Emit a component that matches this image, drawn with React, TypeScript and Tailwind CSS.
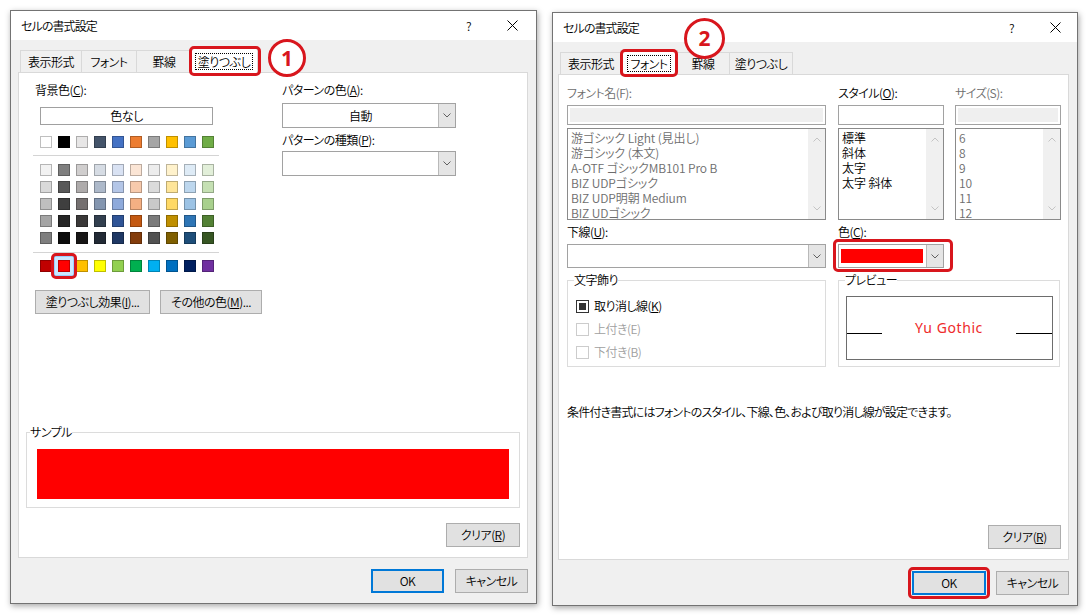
import React from "react";

const themeRow = ["#ffffff", "#000000", "#e7e6e6", "#44546a", "#4472c4", "#ed7d31", "#a5a5a5", "#ffc000", "#5b9bd5", "#70ad47"];
const tints = [
  ["#f2f2f2", "#7f7f7f", "#d0cece", "#d6dce4", "#d9e2f3", "#fbe5d5", "#ededed", "#fff2cc", "#deebf6", "#e2efd9"],
  ["#d9d9d9", "#595959", "#aeabab", "#adb9ca", "#b4c6e7", "#f7caac", "#dbdbdb", "#fee599", "#bdd7ee", "#c5e0b3"],
  ["#bfbfbf", "#3f3f3f", "#757070", "#8496b0", "#8eaadb", "#f4b083", "#c9c9c9", "#ffd965", "#9cc3e5", "#a8d08d"],
  ["#a5a5a5", "#262626", "#3a3838", "#323f4f", "#2f5496", "#c45911", "#7b7b7b", "#bf8f00", "#2e75b5", "#538135"],
  ["#7f7f7f", "#0c0c0c", "#171616", "#222a35", "#1f3864", "#833c0b", "#525252", "#7f5f00", "#1e4e79", "#375623"],
];
const standard = ["#c00000", "#ff0000", "#ffc000", "#ffff00", "#92d050", "#00b050", "#00b0f0", "#0070c0", "#002060", "#7030a0"];

function ChevDown({ color = "#606060" }: { color?: string }) {
  return (
    <svg width="8" height="5" viewBox="0 0 8 5">
      <path d="M0.5 0.5 L4 4 L7.5 0.5" fill="none" stroke={color} strokeWidth="1" />
    </svg>
  );
}
function ChevUp({ color = "#c4c4c4" }: { color?: string }) {
  return (
    <svg width="8" height="5" viewBox="0 0 8 5">
      <path d="M0.5 4.5 L4 1 L7.5 4.5" fill="none" stroke={color} strokeWidth="1" />
    </svg>
  );
}
function XIcon() {
  return (
    <svg width="11" height="11" viewBox="0 0 11 11">
      <path d="M0.5 0.5 L10.5 10.5 M10.5 0.5 L0.5 10.5" stroke="#000" strokeWidth="1" />
    </svg>
  );
}

function RedBox({ className }: { className: string }) {
  return <div className={`pointer-events-none absolute z-20 rounded-[5px] border-[3px] border-[#d8161d] ${className}`} />;
}

function Btn({ children, className = "", def = false }: { children: React.ReactNode; className?: string; def?: boolean }) {
  return (
    <div
      className={`flex h-[24px] items-center justify-center bg-[#e1e1e1] text-[12px] leading-[16px] text-black ${
        def ? "border-2 border-[#0078d7]" : "border border-[#adadad]"
      } ${className}`}
    >
      {children}
    </div>
  );
}

function Combo({ children, className = "", center = true }: { children?: React.ReactNode; className?: string; center?: boolean }) {
  return (
    <div className={`flex border border-[#a2a2a2] bg-white ${className}`}>
      <div className={`flex flex-1 items-center ${center ? "justify-center" : ""}`}>{children}</div>
      <div className="flex w-[17px] items-center justify-center border-l border-[#b9b9b9] bg-[#e5e5e5]">
        <ChevDown />
      </div>
    </div>
  );
}

function Swatch({ c }: { c: string }) {
  return <div className="h-[12px] w-[12px] border border-[#00000040]" style={{ backgroundColor: c }} />;
}

function SwatchRow({ colors, className = "", sel = -1 }: { colors: string[]; className?: string; sel?: number }) {
  return (
    <div className={`flex gap-[6px] ${className}`}>
      {colors.map((c, i) =>
        i === sel ? (
          <div key={i} className="relative h-[12px] w-[12px]">
            <div className="absolute -inset-[4px] border border-[#99d1ff] bg-[#cce8ff]" />
            <div className="relative">
              <Swatch c={c} />
            </div>
            <RedBox className="-left-[7px] -right-[7px] -top-[7px] -bottom-[7px]" />
          </div>
        ) : (
          <Swatch key={i} c={c} />
        )
      )}
    </div>
  );
}

function Tabs({ selected, widths, box }: { selected: number; widths: number[]; box: string }) {
  const labels = ["表示形式", "フォント", "罫線", "塗りつぶし"];
  return (
    <div className="flex h-[24px] items-end pl-[2px]">
      {labels.map((l, i) => {
        const w = widths[i];
        if (i === selected) {
          return (
            <div
              key={l}
              className="relative z-10 -mb-px -ml-[2px] -mr-[2px] flex h-[25px] items-center justify-center border border-b-0 border-[#d9d9d9] bg-white"
              style={{ width: w + 4 }}
            >
              <span className="border border-dotted border-black px-[2px] leading-[15px]">{l}</span>
              <RedBox className={box} />
            </div>
          );
        }
        return (
          <div
            key={l}
            className={`flex h-[22px] items-center justify-center border border-b-0 border-[#d9d9d9] bg-[#f0f0f0] ${i > 0 && i - 1 !== selected ? "-ml-px" : ""}`}
            style={{ width: w }}
          >
            {l}
          </div>
        );
      })}
    </div>
  );
}

function TitleBar({ xMr }: { xMr: string }) {
  return (
    <div className="flex h-[29px] items-center bg-white pl-[10px]">
      <span className="leading-[16px] tracking-[-0.9px]">セルの書式設定</span>
      <span className="ml-auto leading-[16px]">?</span>
      <div className={`ml-[36px] flex items-center ${xMr}`}>
        <XIcon />
      </div>
    </div>
  );
}

function ListBox({ items, gray }: { items: string[]; gray: boolean }) {
  return (
    <div className="mt-[3px] flex h-[92px] border border-[#8a8a8a] bg-white">
      <div className={`flex-1 pl-[3px] pt-[1px] leading-[15px] tracking-[-0.1px] ${gray ? "text-[#6d6d6d]" : "text-black"}`}>
        {items.map((i) => (
          <div key={i} className="whitespace-nowrap">
            {i}
          </div>
        ))}
      </div>
      <div className="flex w-[17px] flex-col items-center justify-between bg-[#f0f0f0] py-[8px]">
        <ChevUp />
        <ChevDown color="#c4c4c4" />
      </div>
    </div>
  );
}

function Check({ label, checked, disabled }: { label: React.ReactNode; checked?: boolean; disabled?: boolean }) {
  return (
    <div className="flex h-[18px] items-center">
      <div
        className={`flex h-[13px] w-[13px] items-center justify-center border bg-white ${
          disabled ? "border-[#cccccc]" : "border-[#333333]"
        }`}
      >
        {checked && <div className="h-[7px] w-[7px] bg-[#333333]" />}
      </div>
      <span className={`ml-[5px] leading-[16px] ${disabled ? "text-[#a0a0a0]" : "text-black"}`}>{label}</span>
    </div>
  );
}

function LeftDialog() {
  return (
    <div className="ml-[10px] mt-[10px] flex h-[594px] w-[527px] flex-col border border-[#737373] bg-[#f0f0f0] shadow-[1px_2px_6px_rgba(0,0,0,0.35)]">
      <TitleBar xMr="mr-[18px]" />
      <div className="flex flex-1 flex-col pl-[7px] pr-[8px] pt-[8px]">
        <Tabs selected={3} widths={[62, 56, 56, 64]} box="-left-[2px] -right-[4px] -top-[3px] -bottom-[3px]" />
        <div className="flex flex-1 flex-col border border-[#d9d9d9] bg-white">
          <div className="flex pl-[16px] pt-[9px]">
            <div className="flex w-[247px] flex-col">
              <div className="h-[16px] leading-[16px]">
                背景色(<u>C</u>):
              </div>
              <div className="ml-[5px] mt-[9px] flex h-[18px] w-[173px] items-center justify-center border border-[#a0a0a0] bg-white leading-[16px]">
                色なし
              </div>
              <SwatchRow colors={themeRow} className="ml-[5px] mt-[11px]" />
              <div className="-ml-[2px] mt-[7px] h-px w-[186px] bg-[#d4d4d4]" />
              <div className="ml-[5px] mt-[8px] flex flex-col gap-[5px]">
                {tints.map((r, i) => (
                  <SwatchRow key={i} colors={r} />
                ))}
              </div>
              <div className="-ml-[2px] mt-[8px] h-px w-[186px] bg-[#d4d4d4]" />
              <SwatchRow colors={standard} className="ml-[5px] mt-[7px]" sel={1} />
              <div className="mt-[18px] flex gap-[10px]">
                <Btn className="w-[115px]">
                  塗りつぶし効果(<u>I</u>)...
                </Btn>
                <Btn className="w-[102px]">
                  その他の色(<u>M</u>)...
                </Btn>
              </div>
            </div>
            <div className="flex w-[174px] flex-col">
              <div className="h-[16px] leading-[16px]">
                パターンの色(<u>A</u>):
              </div>
              <Combo className="mt-[5px] h-[25px]">
                <span className="leading-[16px]">自動</span>
              </Combo>
              <div className="mt-[4px] h-[16px] leading-[16px]">
                パターンの種類(<u>P</u>):
              </div>
              <Combo className="mt-[3px] h-[25px]" />
            </div>
          </div>
          <fieldset className="mx-[7px] mt-auto border border-[#dcdcdc] px-[10px] pb-[8px] pt-[9px]">
            <legend className="ml-[-7px] px-0 leading-[16px]">サンプル</legend>
            <div className="h-[50px] bg-[#ff0000]" />
          </fieldset>
          <div className="mb-[10px] mt-[15px] flex justify-end pr-[7px]">
            <Btn className="w-[74px]">
              クリア(<u>R</u>)
            </Btn>
          </div>
        </div>
      </div>
      <div className="flex h-[45px] items-start justify-end gap-[11px] pr-[8px] pt-[11px]">
        <Btn def className="w-[73px]">
          OK
        </Btn>
        <Btn className="w-[73px]">キャンセル</Btn>
      </div>
    </div>
  );
}

function RightDialog() {
  return (
    <div className="ml-[15px] mt-[12px] flex h-[594px] w-[526px] flex-col border border-[#737373] bg-[#f0f0f0] shadow-[1px_2px_6px_rgba(0,0,0,0.35)]">
      <TitleBar xMr="mr-[16px]" />
      <div className="flex flex-1 flex-col pl-[5px] pr-[8px] pt-[8px]">
        <Tabs selected={1} widths={[62, 54, 54, 64]} box="-left-[1px] -right-[1px] -top-[2px] -bottom-[2px]" />
        <div className="flex flex-1 flex-col border border-[#d9d9d9] bg-white pl-[8px] pt-[10px]">
          <div className="flex">
            <div className="flex w-[259px] flex-col">
              <div className="h-[16px] leading-[16px] text-[#6d6d6d]">フォント名(F):</div>
              <div className="mt-[4px] h-[20px] border border-[#a2a2a2] bg-white p-[2px]">
                <div className="h-full bg-[#efefef]" />
              </div>
              <ListBox
                gray
                items={["游ゴシック Light (見出し)", "游ゴシック (本文)", "A-OTF ゴシックMB101 Pro B", "BIZ UDPゴシック", "BIZ UDP明朝 Medium", "BIZ UDゴシック"]}
              />
            </div>
            <div className="ml-[12px] flex w-[106px] flex-col">
              <div className="h-[16px] leading-[16px]">
                スタイル(<u>O</u>):
              </div>
              <div className="mt-[4px] h-[20px] border border-[#a2a2a2] bg-white" />
              <ListBox gray={false} items={["標準", "斜体", "太字", "太字 斜体"]} />
            </div>
            <div className="ml-[11px] flex w-[106px] flex-col">
              <div className="h-[16px] leading-[16px] text-[#6d6d6d]">サイズ(S):</div>
              <div className="mt-[4px] h-[20px] border border-[#a2a2a2] bg-white p-[2px]">
                <div className="h-full bg-[#efefef]" />
              </div>
              <ListBox gray items={["6", "8", "9", "10", "11", "12"]} />
            </div>
          </div>
          <div className="mt-[4px] flex">
            <div className="flex w-[259px] flex-col">
              <div className="h-[16px] leading-[16px]">
                下線(<u>U</u>):
              </div>
              <Combo className="mt-[4px] h-[24px]" />
            </div>
            <div className="ml-[12px] flex w-[106px] flex-col">
              <div className="h-[16px] leading-[16px]">
                色(<u>C</u>):
              </div>
              <div className="relative mt-[4px]">
                <Combo className="h-[24px]" center={false}>
                  <div className="ml-[2px] mr-[3px] h-[14px] flex-1 bg-[#ff0000]" />
                </Combo>
                <RedBox className="-left-[5px] -right-[9px] -top-[5px] -bottom-[4px]" />
              </div>
            </div>
          </div>
          <div className="mt-[4px] flex">
            <fieldset className="w-[259px] border border-[#dcdcdc] pb-[5px] pl-[8px] pt-[9px]">
              <legend className="ml-[-2px] px-0 leading-[16px]">文字飾り</legend>
              <div className="flex flex-col gap-[5px]">
                <Check
                  checked
                  label={
                    <>
                      取り消し線(<u>K</u>)
                    </>
                  }
                />
                <Check disabled label="上付き(E)" />
                <Check disabled label="下付き(B)" />
              </div>
            </fieldset>
            <fieldset className="ml-[12px] w-[222px] border border-[#dcdcdc] pb-[6px] pl-[7px] pr-[6px] pt-[8px]">
              <legend className="ml-[-1px] px-0 leading-[16px]">プレビュー</legend>
              <div className="flex h-[64px] items-center justify-between border border-[#6d6d6d] bg-white">
                <div className="mt-[10px] h-px w-[35px] bg-black" />
                <span className="font-['Noto_Sans','Noto_Sans_CJK_JP',sans-serif] text-[14px] font-normal leading-[18px] tracking-[0.6px] text-[#ee2a2a]">
                  Yu Gothic
                </span>
                <div className="mt-[10px] h-px w-[36px] bg-black" />
              </div>
            </fieldset>
          </div>
          <div className="mt-[37px] h-[16px] whitespace-nowrap leading-[16px] tracking-[-0.8px]">
            条件付き書式にはフォントのスタイル、下線、色、および取り消し線が設定できます。
          </div>
          <div className="mb-[10px] mt-auto flex justify-end pr-[7px]">
            <Btn className="w-[73px]">
              クリア(<u>R</u>)
            </Btn>
          </div>
        </div>
      </div>
      <div className="flex h-[45px] items-start justify-end gap-[10px] pr-[8px] pt-[11px]">
        <div className="relative">
          <Btn def className="w-[74px]">
            OK
          </Btn>
          <RedBox className="-left-[4px] -right-[4px] -top-[4px] -bottom-[4px]" />
        </div>
        <Btn className="w-[73px]">キャンセル</Btn>
      </div>
    </div>
  );
}

function Circle({ n, className }: { n: string; className: string }) {
  return (
    <div
      className={`absolute z-30 flex items-center justify-center rounded-full border-[3px] border-[#d8161d] bg-white font-['Noto_Sans','Noto_Sans_CJK_JP',sans-serif] text-[21px] font-bold leading-none tracking-normal text-[#d8161d] ${className}`}
    >
      {n}
    </div>
  );
}

export default function App() {
  return (
    <div className="relative flex h-[615px] w-[1090px] items-start overflow-hidden bg-white font-['Noto_Sans_CJK_JP','Noto_Sans',sans-serif] text-[12px] font-[350] tracking-[-0.5px] text-black [font-feature-settings:'palt']">
      <LeftDialog />
      <RightDialog />
      <Circle n="1" className="left-[268px] top-[39px] h-[38px] w-[38px]" />
      <Circle n="2" className="left-[684px] top-[18px] h-[41px] w-[41px]" />
    </div>
  );
}
